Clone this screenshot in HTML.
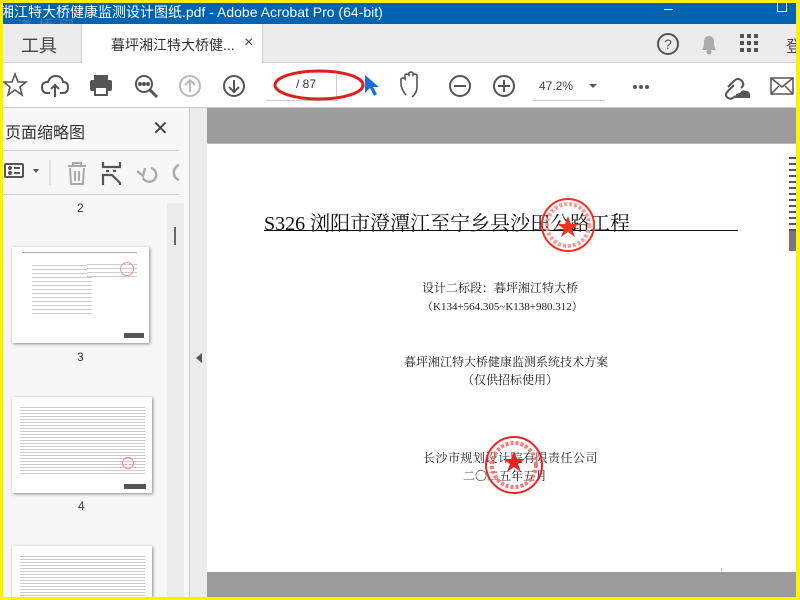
<!DOCTYPE html>
<html><head><meta charset="utf-8"><style>
*{margin:0;padding:0;box-sizing:border-box}
body{width:800px;height:600px;overflow:hidden;background:#fff200;position:relative;font-family:"Liberation Sans","Noto Sans CJK SC",sans-serif}
.a{position:absolute}
.serif{font-family:"Liberation Serif","Noto Serif CJK SC","Noto Sans CJK SC",serif}
svg{position:absolute}
</style></head><body>
<div class="a" style="left:3px;top:3px;width:793px;height:594px;background:#fff;overflow:hidden">
 <div class="a" style="left:-3px;top:0;width:796px;height:21px;background:#0063b1;color:#fff;font-size:14px;line-height:18px;white-space:nowrap">湘江特大桥健康监测设计图纸.pdf - Adobe Acrobat Pro (64-bit)</div>
 <div class="a" style="left:661px;top:6px;width:9px;height:1px;background:#fff"></div>
 <div class="a" style="left:774px;top:0;width:10px;height:9px;border:1px solid #fff;border-top:none"></div>
 <div class="a" style="left:14px;top:12px;font-size:15px;color:#6a88a8;letter-spacing:6px;opacity:.7">道桥网</div>
 <div class="a" style="left:0;top:21px;width:793px;height:39px;background:#ececec;border-bottom:1px solid #d0d0d0"></div>
 <div class="a" style="left:78px;top:21px;width:182px;height:39px;background:#fff;border-left:1px solid #d0d0d0;border-right:1px solid #d0d0d0"></div>
 <div class="a" style="left:18px;top:29px;font-size:18px;color:#444">工具</div>
 <div class="a" style="left:108px;top:32px;font-size:14px;color:#333">暮坪湘江特大桥健...</div>
 <div class="a" style="left:241px;top:31px;font-size:16px;color:#444">×</div>
 <svg style="left:653px;top:29px" width="24" height="24"><circle cx="12" cy="12" r="10" fill="none" stroke="#555" stroke-width="2"/><text x="12" y="17" font-size="14" text-anchor="middle" fill="#555" font-family="Liberation Sans">?</text></svg>
 <svg style="left:695px;top:29px" width="22" height="24"><path d="M4 18 Q6 15 6 10 Q6 4 11 4 Q16 4 16 10 Q16 15 18 18 Z" fill="#aaa"/><circle cx="11" cy="20" r="2.5" fill="#aaa"/></svg>
 <svg style="left:737px;top:31px" width="20" height="20" fill="#555"><rect x="0" y="0" width="4" height="4"/><rect x="7" y="0" width="4" height="4"/><rect x="14" y="0" width="4" height="4"/><rect x="0" y="7" width="4" height="4"/><rect x="7" y="7" width="4" height="4"/><rect x="14" y="7" width="4" height="4"/><rect x="0" y="14" width="4" height="4"/><rect x="7" y="14" width="4" height="4"/><rect x="14" y="14" width="4" height="4"/></svg>
 <div class="a" style="left:783px;top:30px;font-size:16px;color:#444">登</div>
 <div class="a" style="left:0;top:104px;width:793px;height:1px;background:#ccc"></div>
 <svg style="left:0;top:68px" width="260" height="30" fill="none" stroke="#555" stroke-width="2">
  <path d="M12 3 L15 11 L23 11 L17 16 L19 24 L12 19 L5 24 L7 16 L1 11 L9 11 Z" stroke-width="1.6"/>
  <path d="M47 22 L44 22 Q39 22 39 16 Q39 11 45 11 Q47 5 53 5 Q59 5 60 11 Q65 11 65 16 Q65 22 60 22 L57 22 M52 26 L52 14 M48 18 L52 14 L56 18"/>
  <rect x="91" y="4" width="14" height="6" fill="#555" stroke="none"/><rect x="87" y="9" width="22" height="11" rx="2" fill="#555" stroke="none"/><rect x="92" y="16" width="12" height="8" fill="#fff" stroke="#555"/>
  <circle cx="141" cy="13" r="8"/><path d="M147 19 L154 26" stroke-width="3"/><circle cx="137" cy="13" r="1" fill="#555"/><circle cx="141" cy="13" r="1" fill="#555"/><circle cx="145" cy="13" r="1" fill="#555"/>
  <circle cx="187" cy="15" r="10" stroke="#bbb"/><path d="M187 21 L187 9 M182 14 L187 9 L192 14" stroke="#bbb"/>
  <circle cx="231" cy="15" r="10"/><path d="M231 9 L231 21 M226 16 L231 21 L236 16"/>
 </svg>
 <div class="a" style="left:263px;top:97px;width:72px;height:1px;background:#ccc"></div>
 <div class="a" style="left:333px;top:72px;width:1px;height:24px;background:#ccc"></div>
 <div class="a" style="left:293px;top:74px;font-size:12px;color:#333">/ 87</div>
 <svg style="left:270px;top:64px" width="95" height="36"><ellipse cx="46" cy="18" rx="44" ry="14" fill="none" stroke="#e0201f" stroke-width="3"/></svg>
 <svg style="left:360px;top:70px" width="16" height="26"><path d="M2 2 L2 20 L7 15 L11 23 L14 21 L10 14 L16 14 Z" fill="#1a6fd0"/></svg>
 <svg style="left:395px;top:66px" width="400" height="34" fill="none" stroke="#555" stroke-width="2">
  <path d="M8 26 Q3 20 3 15 L3 10 Q5 8 7 10 L7 6 Q9 4 11 6 L11 4 Q13 2 15 4 L15 6 Q17 4 19 6 L19 18 Q19 24 14 28" stroke-width="1.6"/>
  <circle cx="62" cy="17" r="10"/><path d="M56 17 L68 17"/>
  <circle cx="106" cy="17" r="10"/><path d="M100 17 L112 17 M106 11 L106 23"/>
  <path d="M191 15 L199 15 L195 19 Z" fill="#555" stroke="none"/>
  <circle cx="237" cy="18" r="2" fill="#555" stroke="none"/><circle cx="243" cy="18" r="2" fill="#555" stroke="none"/><circle cx="249" cy="18" r="2" fill="#555" stroke="none"/>
  <path d="M330 18 L336 12 Q340 8 344 12 Q347 16 343 19 M336 16 L330 22 Q326 26 330 29 Q334 31 337 27"/><path d="M337 29 Q337 24 342 24 Q344 20 348 22 Q352 22 352 26 L352 29 Z" fill="#555" stroke="none"/>
  <rect x="373" y="9" width="22" height="16" stroke-width="1.5"/><path d="M373 9 L384 18 L395 9 M373 25 L381 17 M395 25 L387 17" stroke-width="1.5"/>
 </svg>
 <div class="a" style="left:536px;top:76px;font-size:12px;color:#444">47.2%</div>
 <div class="a" style="left:530px;top:97px;width:72px;height:1px;background:#ccc"></div>
 <div class="a" style="left:0;top:105px;width:186px;height:489px;background:#f7f7f7"></div>
 <div class="a" style="left:2px;top:116px;font-size:16px;color:#333">页面缩略图</div>
 <div class="a" style="left:149px;top:113px;font-size:20px;color:#444">✕</div>
 <div class="a" style="left:0;top:147px;width:176px;height:1px;background:#ccc"></div>
 <div class="a" style="left:0;top:191px;width:176px;height:1px;background:#ccc"></div>
 <svg style="left:0;top:155px" width="180" height="30" fill="none" stroke="#555" stroke-width="2">
  <rect x="2" y="6" width="18" height="13" rx="1"/><circle cx="7" cy="10" r="1" fill="#555"/><circle cx="7" cy="15" r="1" fill="#555"/><path d="M11 10 L17 10 M11 15 L17 15"/>
  <path d="M30 11 L36 11 L33 15 Z" fill="#555" stroke="none"/>
  <path d="M47 2 L47 27" stroke="#ccc" stroke-width="1"/>
  <path d="M65 8 L83 8 M70 8 L70 5 L78 5 L78 8 M67 10 L68 26 L80 26 L81 10 M72 13 L72 23 M76 13 L76 23" stroke="#aaa"/>
  <path d="M100 4 L100 9 L117 9 L117 4 M100 27 L100 17 L109 17 L117 25 L117 27 M103 13 L106 13 M110 13 L113 13" stroke-width="2.2"/>
  <path d="M148 10 A7 7 0 1 1 140 20 M134 13 L140 18 L142 10" stroke="#aaa" stroke-width="2.4"/>
  <path d="M176 7 A8 8 0 0 0 176 22" stroke="#aaa" stroke-width="2.4"/>
 </svg>
 <div class="a" style="left:74px;top:198px;font-size:12px;color:#333">2</div>
 <div class="a" style="left:164px;top:200px;width:17px;height:394px;background:#ececec"></div>
 <div class="a" style="left:171px;top:224px;width:2px;height:18px;background:#666"></div>
 <div class="a" style="left:9px;top:244px;width:137px;height:96px;background:#fff;box-shadow:1px 1px 3px #888">
  <div class="a" style="left:10px;top:5px;width:115px;height:1px;background:#aaa"></div>
  <div class="a" style="left:20px;top:15px;width:60px;height:55px;background:repeating-linear-gradient(#fff 0 3px,#ccc 3px 4px)"></div>
  <div class="a" style="left:75px;top:14px;width:50px;height:16px;background:repeating-linear-gradient(#fff 0 3px,#ccc 3px 4px)"></div>
  <div class="a" style="left:108px;top:15px;width:14px;height:14px;border:1px solid #f88;border-radius:50%"></div>
  <div class="a" style="left:112px;top:86px;width:20px;height:5px;background:#555"></div>
 </div>
 <div class="a" style="left:74px;top:347px;font-size:12px;color:#333">3</div>
 <div class="a" style="left:9px;top:394px;width:140px;height:96px;background:#fff;box-shadow:1px 1px 3px #888">
  <div class="a" style="left:8px;top:8px;width:125px;height:70px;background:repeating-linear-gradient(#fff 0 2px,#ccc 2px 3px)"></div>
  <div class="a" style="left:110px;top:60px;width:12px;height:12px;border:1px solid #f88;border-radius:50%"></div>
  <div class="a" style="left:112px;top:87px;width:22px;height:5px;background:#555"></div>
 </div>
 <div class="a" style="left:75px;top:496px;font-size:12px;color:#333">4</div>
 <div class="a" style="left:9px;top:543px;width:140px;height:51px;background:#fff;box-shadow:1px 1px 3px #888">
  <div class="a" style="left:8px;top:8px;width:125px;height:43px;background:repeating-linear-gradient(#fff 0 2px,#ccc 2px 3px)"></div>
 </div>
 <div class="a" style="left:186px;top:105px;width:18px;height:489px;background:#ececec;border-left:1px solid #ccc"></div>
 <div class="a" style="left:193px;top:350px;width:0;height:0;border-top:5px solid transparent;border-bottom:5px solid transparent;border-right:6px solid #555"></div>
 <div class="a" style="left:204px;top:105px;width:589px;height:489px;background:#9b9b9b"></div>
 <div class="a" style="left:204px;top:140px;width:589px;height:429px;background:#fff;border-top:1px solid #bbb"></div>
 <div class="a serif" style="left:261px;top:204px;font-size:20px;color:#111;white-space:nowrap">S326 浏阳市澄潭江至宁乡县沙田公路工程</div>
 <div class="a" style="left:261px;top:227px;width:474px;height:1px;background:#111"></div>
 <svg style="left:535px;top:192px" width="60" height="60"><circle cx="30" cy="30" r="26" fill="none" stroke="#e32" stroke-width="2"/><circle cx="30" cy="30" r="21" fill="none" stroke="#f99" stroke-width="4" stroke-dasharray="3 2"/><path d="M30 21 L33 29 L41 29 L34 34 L37 42 L30 37 L23 42 L26 34 L19 29 L27 29 Z" fill="#e32"/></svg>
 <div class="a serif" style="left:419px;top:276px;font-size:12px;color:#222">设计二标段：暮坪湘江特大桥</div>
 <div class="a serif" style="left:419px;top:295px;font-size:11px;color:#222">（K134+564.305~K138+980.312）</div>
 <div class="a serif" style="left:401px;top:350px;font-size:12px;color:#222">暮坪湘江特大桥健康监测系统技术方案</div>
 <div class="a serif" style="left:459px;top:368px;font-size:12px;color:#222">（仅供招标使用）</div>
 <div class="a serif" style="left:420px;top:446px;font-size:12px;color:#222;letter-spacing:.5px">长沙市规划设计院有限责任公司</div>
 <div class="a serif" style="left:460px;top:464px;font-size:12px;color:#222">二〇二五年五月</div>
 <svg style="left:480px;top:431px" width="62" height="62"><circle cx="31" cy="31" r="28" fill="none" stroke="#e22" stroke-width="2"/><circle cx="31" cy="31" r="22" fill="none" stroke="#f77" stroke-width="4" stroke-dasharray="3 2"/><path d="M31 17 L34 25 L42 25 L35 30 L38 38 L31 33 L24 38 L27 30 L20 25 L28 25 Z" fill="#e22"/></svg>
 <div class="a" style="left:786px;top:150px;width:7px;height:100px;background:repeating-linear-gradient(#fff 0 4px,#555 4px 6px)"></div>
 <div class="a" style="left:786px;top:228px;width:7px;height:20px;background:#777"></div>
 <div class="a" style="left:717px;top:566px;font-size:6px;color:#999">1</div>
</div>
</body></html>
